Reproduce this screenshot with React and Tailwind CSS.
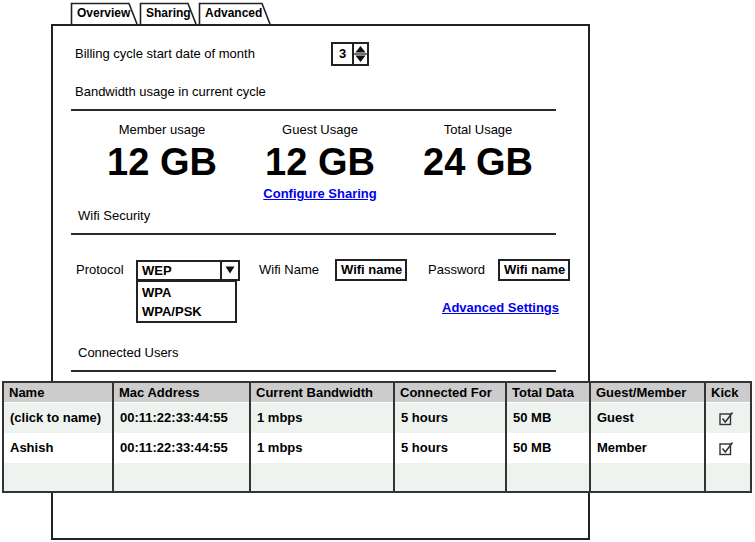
import React from "react";

const font = { fontFamily: '"Liberation Sans", Arial, sans-serif' };

function Tab({ label, w }) {
  return (
    <div className="relative h-[22px] flex items-end pb-[3px] pl-[7px]" style={{ width: w }}>
      <svg className="absolute inset-0" width={w} height="22" viewBox={`0 0 ${w} 22`}>
        <path
          d={`M1.5 22 L1.5 1.5 L${w - 9} 1.5 L${w - 1} 22`}
          fill="none"
          stroke="#222"
          strokeWidth="1.6"
        />
      </svg>
      <span className="relative text-[12px] font-bold leading-[15px] text-black">{label}</span>
    </div>
  );
}

function Rule() {
  return <div className="ml-[18px] w-[485px] h-[2px] bg-[#2a2a2a]" />;
}

function Spinner() {
  return (
    <div className="flex h-[24px] w-[38px] border-2 border-[#222] bg-white">
      <div className="w-[19px] flex items-center justify-center text-[13px] font-bold">3</div>
      <div className="flex-1 border-l-2 border-[#222] flex flex-col">
        <svg viewBox="0 0 14 20" className="w-full h-full">
          <path d="M7 1.5 L12.5 8.5 L1.5 8.5 Z" fill="#111" />
          <line x1="0" y1="10" x2="14" y2="10" stroke="#222" strokeWidth="1.4" />
          <path d="M1.5 11.5 L12.5 11.5 L7 18.5 Z" fill="#111" />
        </svg>
      </div>
    </div>
  );
}

function Check() {
  return (
    <svg width="15" height="15" viewBox="0 0 15 15">
      <rect x="1" y="3" width="10.5" height="10.5" fill="none" stroke="#333" strokeWidth="1.4" />
      <path d="M3.5 7.5 L6.3 11 L13.5 1.5" fill="none" stroke="#333" strokeWidth="1.5" />
    </svg>
  );
}

const cols = [
  { h: "Name", w: 110 },
  { h: "Mac Address", w: 137 },
  { h: "Current Bandwidth", w: 144 },
  { h: "Connected For", w: 112 },
  { h: "Total Data", w: 84 },
  { h: "Guest/Member", w: 115 },
  { h: "Kick", w: 44 },
];

const rows = [
  ["(click to name)", "00:11:22:33:44:55", "1 mbps", "5 hours", "50 MB", "Guest", "x"],
  ["Ashish", "00:11:22:33:44:55", "1 mbps", "5 hours", "50 MB", "Member", "x"],
  ["", "", "", "", "", "", ""],
];

function Usage({ label, value, children }) {
  return (
    <div className="w-[158px] flex flex-col items-center">
      <div className="h-[16px] leading-[16px] text-[13px]">{label}</div>
      <div className="mt-[4px] h-[40px] leading-[40px] text-[38px] font-bold">{value}</div>
      {children}
    </div>
  );
}

export default function App() {
  return (
    <div className="relative w-[755px] h-[542px] bg-white overflow-hidden text-black" style={font}>
      <div className="flex gap-[1px] pl-[70px] pt-[2px]">
        <Tab label="Overview" w={68} />
        <Tab label="Sharing" w={58} />
        <Tab label="Advanced" w={73} />
      </div>

      <div className="ml-[51px] w-[539px] h-[516px] border-2 border-[#222] flex flex-col">
        <div className="mt-[16px] h-[24px] flex items-center pl-[22px]">
          <span className="text-[13px] w-[256px]">Billing cycle start date of month</span>
          <Spinner />
        </div>

        <div className="mt-[18px] pl-[22px] h-[16px] leading-[16px] text-[13px]">
          Bandwidth usage in current cycle
        </div>
        <div className="mt-[9px]">
          <Rule />
        </div>

        <div className="mt-[11px] ml-[30px] flex">
          <Usage label="Member usage" value="12 GB" />
          <Usage label="Guest Usage" value="12 GB">
            <a className="mt-[4px] h-[16px] leading-[16px] text-[13px] font-bold text-[#0000ee] underline" href="#">
              Configure Sharing
            </a>
          </Usage>
          <Usage label="Total Usage" value="24 GB" />
        </div>

        <div className="mt-[6px] pl-[25px] h-[16px] leading-[16px] text-[13px]">Wifi Security</div>
        <div className="mt-[9px]">
          <Rule />
        </div>

        <div className="mt-[23px] h-[24px] flex items-center pl-[23px] text-[13px]">
          <span className="w-[60px]">Protocol</span>
          <div className="relative">
            <div className="w-[104px] h-[21px] border-2 border-[#222] flex bg-white">
              <span className="flex-1 pl-[4px] leading-[17px] font-bold">WEP</span>
              <div className="w-[18px] border-l-2 border-[#222] flex items-center justify-center">
                <svg width="10" height="8" viewBox="0 0 10 8">
                  <path d="M0.5 0.5 L9.5 0.5 L5 7.5 Z" fill="#111" />
                </svg>
              </div>
            </div>
            <div className="absolute left-0 top-[20px] w-[101px] h-[43px] border-2 border-[#222] bg-white flex flex-col pl-[4px] pt-[1px] font-bold leading-[19px]">
              <span>WPA</span>
              <span>WPA/PSK</span>
            </div>
          </div>
          <span className="ml-[19px] w-[76px]">Wifi Name</span>
          <div className="w-[72px] h-[22px] border-2 border-[#222] flex items-center pl-[4px] font-bold">Wifi name</div>
          <span className="ml-[21px] w-[70px]">Password</span>
          <div className="w-[72px] h-[22px] border-2 border-[#222] flex items-center pl-[4px] font-bold">Wifi name</div>
        </div>

        <div className="mt-[17px] pl-[389px] h-[16px] leading-[16px]">
          <a className="text-[13px] font-bold text-[#0000ee] underline" href="#">
            Advanced Settings
          </a>
        </div>

        <div className="mt-[30px] pl-[25px] h-[16px] leading-[16px] text-[13px]">Connected Users</div>
        <div className="mt-[9px]">
          <Rule />
        </div>

        <div className="mt-[9px] ml-[-51px] w-[750px] border-2 border-[#333] bg-[#eef3ef] flex text-[13px] relative">
          {cols.map((c, ci) => (
            <div
              key={c.h}
              className={`flex flex-col ${ci < cols.length - 1 ? "border-r-2 border-[#333]" : "flex-1"}`}
              style={ci < cols.length - 1 ? { width: c.w } : undefined}
            >
              <div className="h-[20px] bg-[#cccccc] border-b border-white flex items-center pl-[5px] font-bold">
                {c.h}
              </div>
              {rows.map((r, ri) => (
                <div
                  key={ri}
                  className={`${ri === 2 ? "h-[28px]" : "h-[30px]"} ${ri === 1 ? "bg-white" : "bg-[#eef3ef]"} flex items-center pl-[6px] font-bold`}
                >
                  {ci === 6 ? (r[6] ? <span className="ml-[7px]"><Check /></span> : null) : r[ci]}
                </div>
              ))}
            </div>
          ))}
        </div>
      </div>
    </div>
  );
}
